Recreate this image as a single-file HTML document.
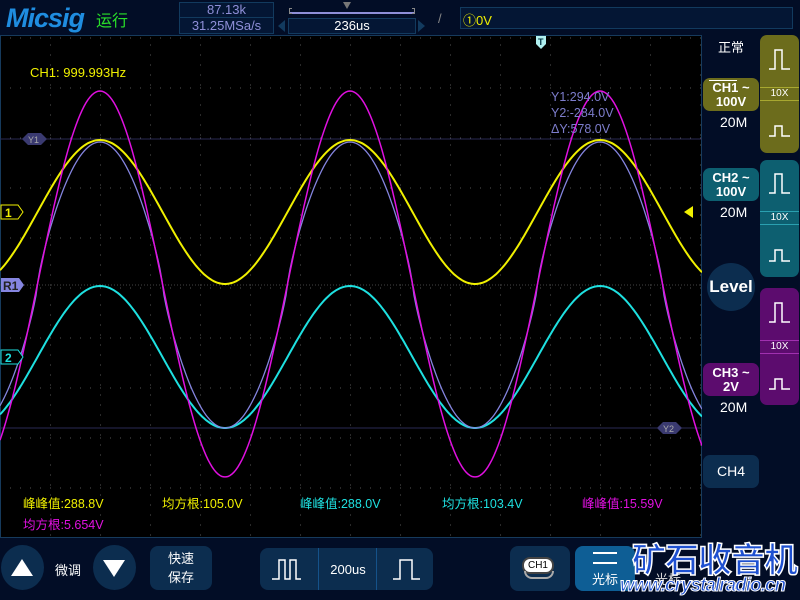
<!DOCTYPE html>
<html><head><meta charset="utf-8"><style>
*{margin:0;padding:0;box-sizing:border-box}
body{width:800px;height:600px;background:#020d26;font-family:"Liberation Sans","Noto Sans CJK SC",sans-serif;position:relative;overflow:hidden;color:#fff}
.a{position:absolute}
.box{position:absolute;border:1px solid #123a5e;background:#041634}
.btn{position:absolute;background:#0c2d4f;border-radius:8px}
.rb{position:absolute;border-radius:7px}
.m{position:absolute;font-size:12.5px;white-space:nowrap}
</style></head><body>
<div class="a" style="left:6px;top:3px;font:italic bold 27px 'Liberation Sans',sans-serif;color:#1f8de0;letter-spacing:-1px">Micsig</div>
<div class="a" style="left:96px;top:7px;font-size:16px;color:#29e029">运行</div>
<div class="box" style="left:179px;top:2px;width:95px;height:32px"></div>
<div class="a" style="left:179px;top:17px;width:95px;height:1px;background:#123a5e"></div>
<div class="a" style="left:179px;top:2px;width:95px;text-align:center;font-size:13px;color:#8f8fd8">87.13k</div>
<div class="a" style="left:179px;top:18px;width:95px;text-align:center;font-size:13px;color:#8f8fd8">31.25MSa/s</div>
<div class="a" style="left:289px;top:12px;width:126px;height:2px;background:#8f8fd8"></div>
<div class="a" style="left:289px;top:8px;width:3px;height:6px;border:1px solid #888;border-right:none"></div>
<div class="a" style="left:412px;top:8px;width:3px;height:6px;border:1px solid #888;border-left:none"></div>
<div class="a" style="left:343px;top:2px;border-left:4px solid transparent;border-right:4px solid transparent;border-top:7px solid #777"></div>
<div class="box" style="left:288px;top:18px;width:128px;height:16px;font-size:13px;text-align:center;color:#fff;line-height:14px">236us</div>
<div class="a" style="left:278px;top:20px;border-top:6px solid transparent;border-bottom:6px solid transparent;border-right:7px solid #123a5e"></div>
<div class="a" style="left:418px;top:20px;border-top:6px solid transparent;border-bottom:6px solid transparent;border-left:7px solid #123a5e"></div>
<div class="a" style="left:438px;top:11px;color:#888;font-size:13px">/</div>
<div class="box" style="left:460px;top:7px;width:333px;height:22px;color:#f0f000;font-size:13px;padding:2px 2px">①0V</div>

<svg class="a" style="left:0;top:35px" width="702" height="503" id="plot">
<rect x="0.5" y="0.5" width="701" height="502" fill="#000" stroke="#163a5c"/>
</svg>
<div class="m" style="left:30px;top:65px;color:#f0f000;font-size:13px">CH1: 999.993Hz</div>
<div class="m" style="left:551px;top:90px;color:#7d7dcc">Y1:294.0V</div>
<div class="m" style="left:551px;top:106px;color:#7d7dcc">Y2:-284.0V</div>
<div class="m" style="left:551px;top:122px;color:#7d7dcc">ΔY:578.0V</div>
<div class="m" style="left:23px;top:493px;color:#f0f000">峰峰值:288.8V</div>
<div class="m" style="left:162px;top:493px;color:#f0f000">均方根:105.0V</div>
<div class="m" style="left:300px;top:493px;color:#1ee0e0">峰峰值:288.0V</div>
<div class="m" style="left:442px;top:493px;color:#1ee0e0">均方根:103.4V</div>
<div class="m" style="left:582px;top:493px;color:#e010e0">峰峰值:15.59V</div>
<div class="m" style="left:23px;top:514px;color:#e010e0">均方根:5.654V</div>

<div class="a" style="left:718px;top:37px;font-size:13px">正常</div>
<div class="rb" style="left:760px;top:35px;width:39px;height:118px;background:#6c6c1c"></div>
<div class="rb" style="left:760px;top:160px;width:39px;height:117px;background:#0d5f70"></div>
<div class="rb" style="left:760px;top:288px;width:39px;height:117px;background:#5c0c6e"></div>
<div class="a" style="left:760px;top:87px;width:39px;height:14px;border-top:1px solid #a8a830;border-bottom:1px solid #a8a830;font-size:10px;text-align:center;line-height:12px">10X</div>
<div class="a" style="left:760px;top:211px;width:39px;height:14px;border-top:1px solid #2aa0b0;border-bottom:1px solid #2aa0b0;font-size:10px;text-align:center;line-height:12px">10X</div>
<div class="a" style="left:760px;top:340px;width:39px;height:14px;border-top:1px solid #a030b0;border-bottom:1px solid #a030b0;font-size:10px;text-align:center;line-height:12px">10X</div>
<svg class="a" style="left:760px;top:35px" width="40" height="370">
<g fill="none" stroke="#fff" stroke-width="1.5">
<path d="M9 34H15V15H22V34H30"/><path d="M9 101H15V91H22V101H30"/>
<path d="M9 158H15V139H22V158H30"/><path d="M9 226H15V215H22V226H30"/>
<path d="M9 287H15V268H22V287H30"/><path d="M9 354H15V344H22V354H30"/>
</g></svg>
<div class="rb" style="left:703px;top:78px;width:56px;height:33px;background:#6c6c1c;text-align:center;font-weight:bold;font-size:13px;line-height:14px;padding-top:3px">CH1 ~<br>100V</div>
<div class="a" style="left:709px;top:80px;width:28px;height:1px;background:#fff"></div>
<div class="a" style="left:720px;top:114px;font-size:14px">20M</div>
<div class="rb" style="left:703px;top:168px;width:56px;height:33px;background:#0d5f70;text-align:center;font-weight:bold;font-size:13px;line-height:14px;padding-top:3px">CH2 ~<br>100V</div>
<div class="a" style="left:720px;top:204px;font-size:14px">20M</div>
<div class="a" style="left:707px;top:263px;width:48px;height:48px;border-radius:50%;background:#0c2d4f;font-weight:bold;font-size:17px;text-align:center;line-height:48px">Level</div>
<div class="rb" style="left:703px;top:363px;width:56px;height:33px;background:#5c0c6e;text-align:center;font-weight:bold;font-size:13px;line-height:14px;padding-top:3px">CH3 ~<br>2V</div>
<div class="a" style="left:720px;top:399px;font-size:14px">20M</div>
<div class="rb" style="left:703px;top:455px;width:56px;height:33px;background:#0c2d4f;text-align:center;font-size:14px;line-height:33px">CH4</div>

<div class="a" style="left:1px;top:545px;width:43px;height:45px;border-radius:50%;background:#0c2d4f"></div>
<div class="a" style="left:11px;top:559px;border-left:11px solid transparent;border-right:11px solid transparent;border-bottom:17px solid #fff"></div>
<div class="a" style="left:55px;top:560px;font-size:13px">微调</div>
<div class="a" style="left:93px;top:545px;width:43px;height:45px;border-radius:50%;background:#0c2d4f"></div>
<div class="a" style="left:103px;top:560px;border-left:11px solid transparent;border-right:11px solid transparent;border-top:17px solid #fff"></div>
<div class="btn" style="left:150px;top:546px;width:62px;height:44px;font-size:13px;text-align:center;line-height:19px;padding-top:3px">快速<br>保存</div>
<div class="btn" style="left:260px;top:548px;width:173px;height:42px"></div>
<div class="a" style="left:318px;top:548px;width:1px;height:42px;background:#15528a"></div>
<div class="a" style="left:376px;top:548px;width:1px;height:42px;background:#15528a"></div>
<div class="a" style="left:320px;top:562px;width:56px;text-align:center;font-size:13px">200us</div>
<svg class="a" style="left:260px;top:548px" width="173" height="42"><g fill="none" stroke="#fff" stroke-width="1.5"><path d="M12 31H19V12H25V31H30V12H36V31H41"/><path d="M133 31H140V12H152V31H160"/></g></svg>
<div class="btn" style="left:510px;top:546px;width:60px;height:45px"></div>
<div class="a" style="left:522px;top:557px;width:32px;height:17px;border-radius:8px;background:#fff;border:2px solid #444;color:#000;font-size:10px;text-align:center;line-height:13px">CH1</div>
<div class="a" style="left:524px;top:571px;width:30px;height:8px;border-radius:0 0 8px 8px;border:2px solid #aaa;border-top:none"></div>
<div class="btn" style="left:575px;top:546px;width:60px;height:45px;background:#0e5e95"></div>
<div class="a" style="left:593px;top:552px;width:24px;height:12px;border-top:2px solid #fff;border-bottom:2px solid #fff"></div>
<div class="a" style="left:592px;top:569px;font-size:13px">光标</div>
<div class="a" style="left:655px;top:569px;font-size:13px;color:#ddd">光标</div>
<div class="a" style="left:632px;top:533px;font:bold 34px 'Noto Sans CJK SC',sans-serif;color:#1e50d0;letter-spacing:-1px;-webkit-text-stroke:1.5px #fff">矿石收音机</div>
<div class="a" style="left:620px;top:575px;font:bold italic 19px 'Liberation Sans',sans-serif;color:#1e50d0;-webkit-text-stroke:1px #fff;letter-spacing:-1px">www.crystalradio.cn</div>

<script>
var s=document.getElementById('plot'),ns='http://www.w3.org/2000/svg';
function el(t,a){var e=document.createElementNS(ns,t);for(var k in a)e.setAttribute(k,a[k]);s.appendChild(e);return e}
var g='';
for(var x=50;x<702;x+=50)for(var y=10;y<503;y+=10)g+='M'+x+' '+y+'h1';
for(var y=3;y<503;y+=50)for(var x=10;x<702;x+=10)g+='M'+x+' '+y+'h1';
el('path',{d:g,stroke:'#555','stroke-width':1});
el('line',{x1:0,y1:104,x2:702,y2:104,stroke:'#2a2a55'});
el('line',{x1:0,y1:393,x2:702,y2:393,stroke:'#2a2a55'});
el('line',{x1:0,y1:250,x2:702,y2:250,stroke:'#444','stroke-dasharray':'1 2'});
function w(c,cy,A,sh,col,sw){var d='';for(var x=0;x<=702;x+=2){var v=Math.cos(2*Math.PI*(x-100)/250);if(sh)v=Math.sign(v)*Math.pow(Math.abs(v),0.8);d+=(x?'L':'M')+x+' '+(cy-35-A*v).toFixed(1)}el('path',{d:d,fill:'none',stroke:col,'stroke-width':sw})}
w(0,212,72,0,'#f0f000',2);
w(0,357,71,0,'#1ee0e0',2);
w(0,285,143,1,'#8585e0',1.3);
w(0,284,193,0,'#e010e0',1.5);
el('path',{d:'M22 104l6-6h13l6 6-6 6h-13z',fill:'#3a3a70'});
el('text',{x:28,y:108,fill:'#aaa','font-size':9,'font-family':'Liberation Sans'}).textContent='Y1';
el('path',{d:'M657 393l6-6h13l6 6-6 6h-13z',fill:'#3a3a70'});
el('text',{x:663,y:397,fill:'#aaa','font-size':9,'font-family':'Liberation Sans'}).textContent='Y2';
el('path',{d:'M1 170h17l5 7-5 7h-17z',fill:'#000',stroke:'#f0f000'});
el('text',{x:5,y:182,fill:'#f0f000','font-size':12,'font-weight':'bold','font-family':'Liberation Sans'}).textContent='1';
el('path',{d:'M1 243h18l5 7-5 7h-18z',fill:'#8585e0'});
el('text',{x:3,y:255,fill:'#222','font-size':12,'font-weight':'bold','font-family':'Liberation Sans'}).textContent='R1';
el('path',{d:'M1 315h17l5 7-5 7h-17z',fill:'#000',stroke:'#1ee0e0'});
el('text',{x:5,y:327,fill:'#1ee0e0','font-size':12,'font-weight':'bold','font-family':'Liberation Sans'}).textContent='2';
el('path',{d:'M536 1h10v8l-5 5-5-5z',fill:'#b0f0f0'});
el('text',{x:538,y:10,fill:'#034','font-size':9,'font-weight':'bold','font-family':'Liberation Sans'}).textContent='T';
el('path',{d:'M684 177l9-6v12z',fill:'#f0f000'});
</script>
</body></html>
